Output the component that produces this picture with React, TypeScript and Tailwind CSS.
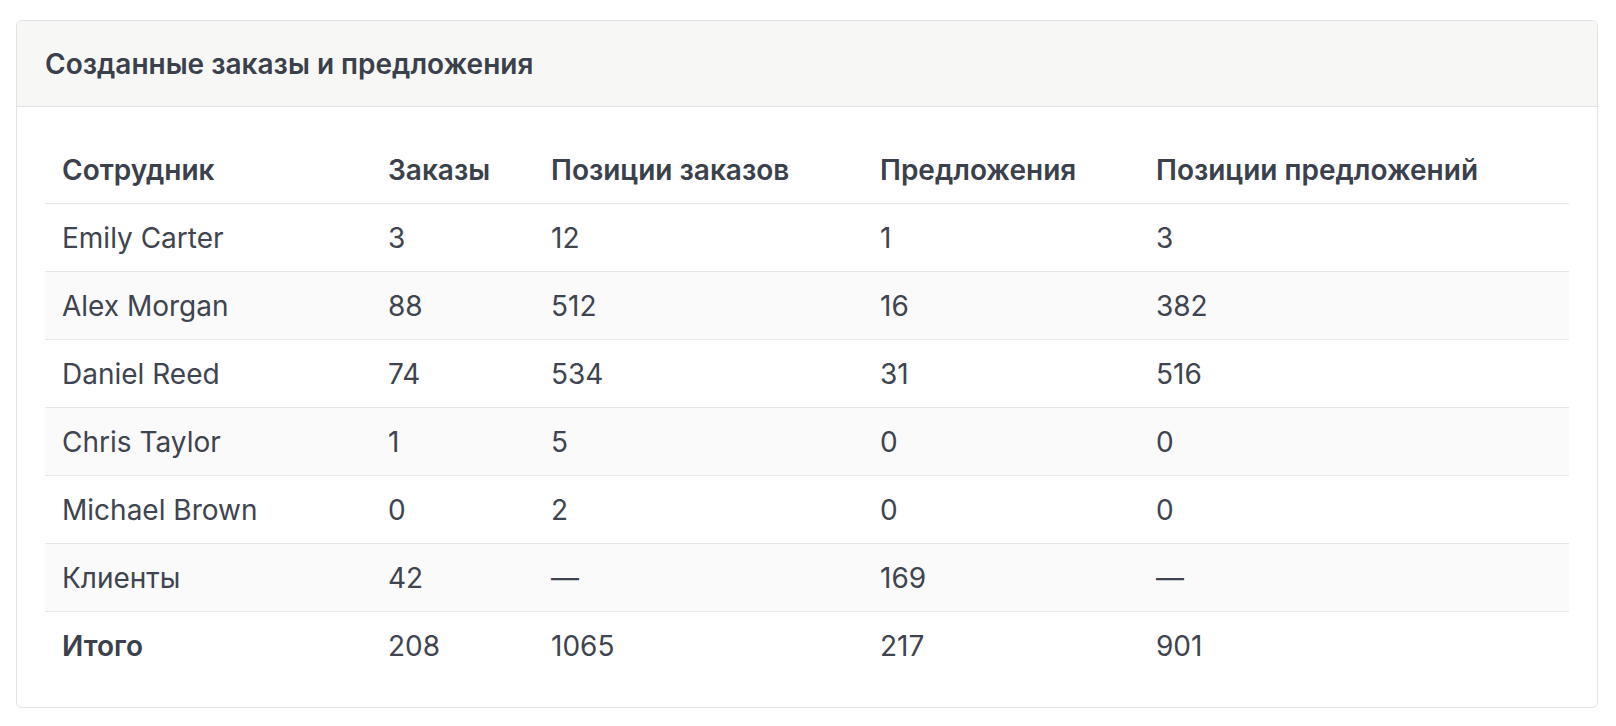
const rows = [
  { name: "Emily Carter", v: ["3", "12", "1", "3"] },
  { name: "Alex Morgan", v: ["88", "512", "16", "382"] },
  { name: "Daniel Reed", v: ["74", "534", "31", "516"] },
  { name: "Chris Taylor", v: ["1", "5", "0", "0"] },
  { name: "Michael Brown", v: ["0", "2", "0", "0"] },
  { name: "Клиенты", v: ["42", "—", "169", "—"] },
];

const heads = ["Сотрудник", "Заказы", "Позиции заказов", "Предложения", "Позиции предложений"];

const grid = "grid grid-cols-[326px_163px_329px_276px_1fr] h-[68px] items-center";

export default function App() {
  return (
    <div className="min-h-screen bg-white pt-5 pl-4 pr-[18px] font-['Inter',sans-serif] text-[28px] text-[#3e4450]">
      <div className="border border-[#dfe2e6] rounded-md overflow-hidden">
        <div className="h-[86px] bg-[#f7f7f5] border-b border-[#dfe2e6] px-7 flex items-center">
          <h2 className="font-semibold text-[#3b414c]">Созданные заказы и предложения</h2>
        </div>
        <div className="px-7 pt-[29px] pb-[27px]">
          <div className={`${grid} border-b border-[#e3e6ea]`}>
            {heads.map((h) => (
              <div key={h} className="px-[17px] font-semibold text-[#3b414c]">
                {h}
              </div>
            ))}
          </div>
          {rows.map((r, i) => (
            <div
              key={r.name}
              className={`${grid} border-b border-[#e3e6ea] ${i % 2 === 1 ? "bg-[#fafafa]" : ""}`}
            >
              <div className="px-[17px]">{r.name}</div>
              {r.v.map((x, j) => (
                <div key={j} className="px-[17px]">
                  {x}
                </div>
              ))}
            </div>
          ))}
          <div className={grid}>
            <div className="px-[17px] font-semibold text-[#3b414c]">Итого</div>
            {["208", "1065", "217", "901"].map((x) => (
              <div key={x} className="px-[17px]">
                {x}
              </div>
            ))}
          </div>
        </div>
      </div>
    </div>
  );
}
